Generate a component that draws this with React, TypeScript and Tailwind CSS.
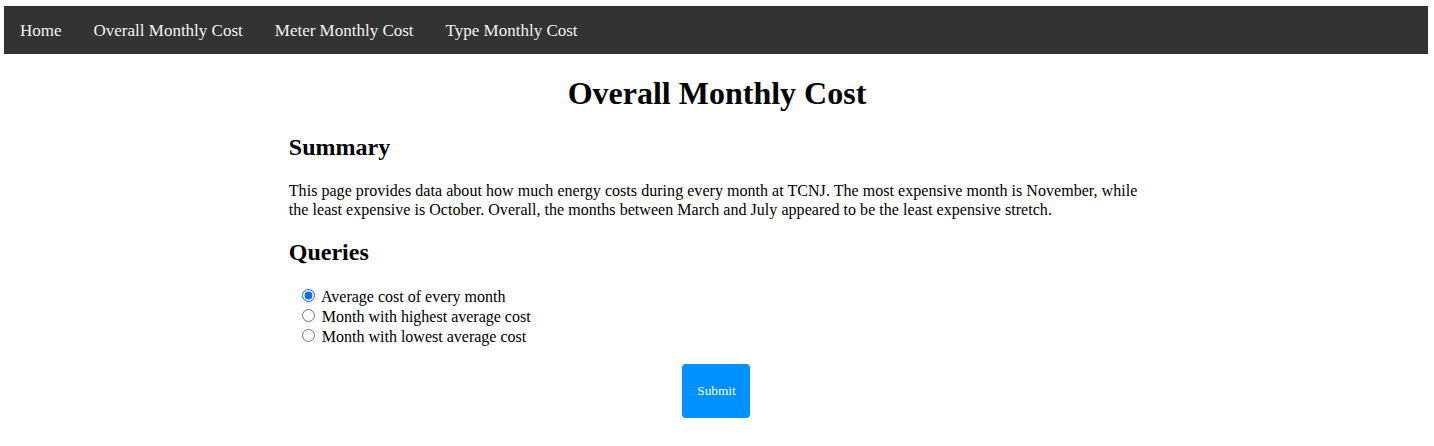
import React from "react";

export default function App() {
  const navItems = ["Home", "Overall Monthly Cost", "Meter Monthly Cost", "Type Monthly Cost"];
  return (
    <div className="min-h-[446px] bg-white text-black" style={{ fontFamily: '"Liberation Serif", "Times New Roman", serif' }}>
      <div className="pt-[6px] pl-[4px]">
        <nav className="flex w-[1424px] bg-[#333333]">
          {navItems.map((t) => (
            <a key={t} className="block px-[16px] pt-[15px] pb-[13px] text-[17px] leading-[20px] text-[#f2f2f2]">
              {t}
            </a>
          ))}
        </nav>
      </div>
      <div className="mx-auto w-[60%]">
        <h1 className="mt-[21.44px] mb-[21.44px] text-center text-[32px] font-bold leading-[36.8px]">Overall Monthly Cost</h1>
        <h2 className="mt-[19.92px] mb-[19.92px] pl-[2px] text-[24px] font-bold leading-[27.6px]">Summary</h2>
        <p className="my-[16px] pl-[2px] pt-[1px] text-[16px] leading-[18.4px] tracking-[0.04px]">
          This page provides data about how much energy costs during every month at TCNJ. The most expensive month is November, while the least expensive is October. Overall, the months between March and July appeared to be the least expensive stretch.
        </p>
        <h2 className="mt-[19.92px] mb-[19.92px] pl-[2px] text-[24px] font-bold leading-[27.6px]">Queries</h2>
        <div className="pl-[10px] text-[16px] leading-[18.4px]">
          {[
            "Average cost of every month",
            "Month with highest average cost",
            "Month with lowest average cost",
          ].map((t, i) => (
            <label key={t} className="block h-[20px]">
              <input
                type="radio"
                name="q"
                defaultChecked={i === 0}
                className="mt-[3px] mr-[3px] ml-[5px] mb-0 inline-block h-[13px] w-[13px] align-baseline accent-[#0a6cff]"
              />{" "}
              {t}
            </label>
          ))}
          <div className="h-[17.6px]" />
        </div>
        <div className="flex justify-center pr-[1px]">
          <button className="h-[54px] w-[68px] rounded-[4px] bg-[#0091ff] text-[13.33px] text-white">Submit</button>
        </div>
      </div>
    </div>
  );
}
